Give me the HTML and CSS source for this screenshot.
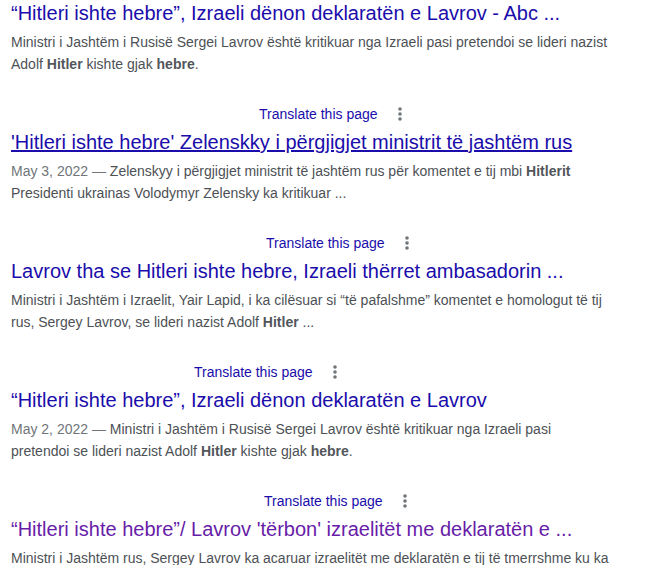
FILE: index.html
```html
<!DOCTYPE html>
<html lang="en">
<head>
    <meta charset="UTF-8">
    <meta name="viewport" content="width=device-width, initial-scale=1.0">
    <title>Hitleri ishte hebre - Search</title>
    <link rel="stylesheet" href="styles.css">
</head>
<body>

    <div class="results">

        <div class="result">
            <a class="title" href="#">“Hitleri ishte hebre”, Izraeli dënon deklaratën e Lavrov - Abc ...</a>
            <p class="snippet">Ministri i Jashtëm i Rusisë Sergei Lavrov është kritikuar nga Izraeli pasi pretendoi se lideri nazist Adolf <b>Hitler</b> kishte gjak <b>hebre</b>.</p>
        </div>

        <div class="result">
            <div class="meta">
                <span class="cite" style="width:248px"></span>
                <a class="translate" href="#">Translate this page</a>
                <svg class="more" width="4" height="14" viewBox="0 0 4 14"><circle cx="2" cy="2" r="1.8"/><circle cx="2" cy="7" r="1.8"/><circle cx="2" cy="12" r="1.8"/></svg>
            </div>
            <a class="title hover" href="#">'Hitleri ishte hebre' Zelenskky i përgjigjet ministrit të jashtëm rus</a>
            <p class="snippet"><span class="date">May 3, 2022 — </span>Zelenskyy i përgjigjet ministrit të jashtëm rus për komentet e tij mbi <b>Hitlerit</b> Presidenti ukrainas Volodymyr Zelensky ka kritikuar ...</p>
        </div>

        <div class="result">
            <div class="meta">
                <span class="cite" style="width:255px"></span>
                <a class="translate" href="#">Translate this page</a>
                <svg class="more" width="4" height="14" viewBox="0 0 4 14"><circle cx="2" cy="2" r="1.8"/><circle cx="2" cy="7" r="1.8"/><circle cx="2" cy="12" r="1.8"/></svg>
            </div>
            <a class="title" href="#">Lavrov tha se Hitleri ishte hebre, Izraeli thërret ambasadorin ...</a>
            <p class="snippet">Ministri i Jashtëm i Izraelit, Yair Lapid, i ka cilësuar si “të pafalshme” komentet e homologut të tij rus, Sergey Lavrov, se lideri nazist Adolf <b>Hitler</b> ...</p>
        </div>

        <div class="result">
            <div class="meta">
                <span class="cite" style="width:183px"></span>
                <a class="translate" href="#">Translate this page</a>
                <svg class="more" width="4" height="14" viewBox="0 0 4 14"><circle cx="2" cy="2" r="1.8"/><circle cx="2" cy="7" r="1.8"/><circle cx="2" cy="12" r="1.8"/></svg>
            </div>
            <a class="title" href="#">“Hitleri ishte hebre”, Izraeli dënon deklaratën e Lavrov</a>
            <p class="snippet"><span class="date">May 2, 2022 — </span>Ministri i Jashtëm i Rusisë Sergei Lavrov është kritikuar nga Izraeli pasi pretendoi se lideri nazist Adolf <b>Hitler</b> kishte gjak <b>hebre</b>.</p>
        </div>

        <div class="result">
            <div class="meta">
                <span class="cite" style="width:253px"></span>
                <a class="translate" href="#">Translate this page</a>
                <svg class="more" width="4" height="14" viewBox="0 0 4 14"><circle cx="2" cy="2" r="1.8"/><circle cx="2" cy="7" r="1.8"/><circle cx="2" cy="12" r="1.8"/></svg>
            </div>
            <a class="title visited" href="#">“Hitleri ishte hebre”/ Lavrov 'tërbon' izraelitët me deklaratën e ...</a>
            <p class="snippet">Ministri i Jashtëm rus, Sergey Lavrov ka acaruar izraelitët me deklaratën e tij të tmerrshme ku ka shpallur se Adolf <b>Hitler</b> kishte gjak hebre ...</p>
        </div>

    </div>

</body>
</html>
```

FILE: styles.css
```css
/* Search results */
body {
    margin: 0;
    background: #fff;
    font-family: "Liberation Sans", Arial, sans-serif;
}

.results {
    padding: 0 11px;
}

.result {
    margin-bottom: 28px;
}

.meta {
    display: flex;
    align-items: center;
    height: 22px;
    margin-bottom: 4px;
}

.cite {
    flex: none;
}

.translate {
    font-size: 14px;
    color: #1a0dab;
    text-decoration: none;
}

.more {
    margin-left: 20px;
    fill: #70757a;
}

.title {
    display: block;
    font-size: 20px;
    line-height: 26px;
    color: #1a0dab;
    text-decoration: none;
    margin-bottom: 5px;
    white-space: nowrap;
}

.title.hover {
    text-decoration: underline;
}

.title.visited {
    color: #681da8;
}

.snippet {
    max-width: 600px;
    margin: 0;
    font-size: 14px;
    line-height: 22px;
    color: #4d5156;
}

.snippet b {
    color: #52565b;
}

.date {
    color: #70757a;
}
```
